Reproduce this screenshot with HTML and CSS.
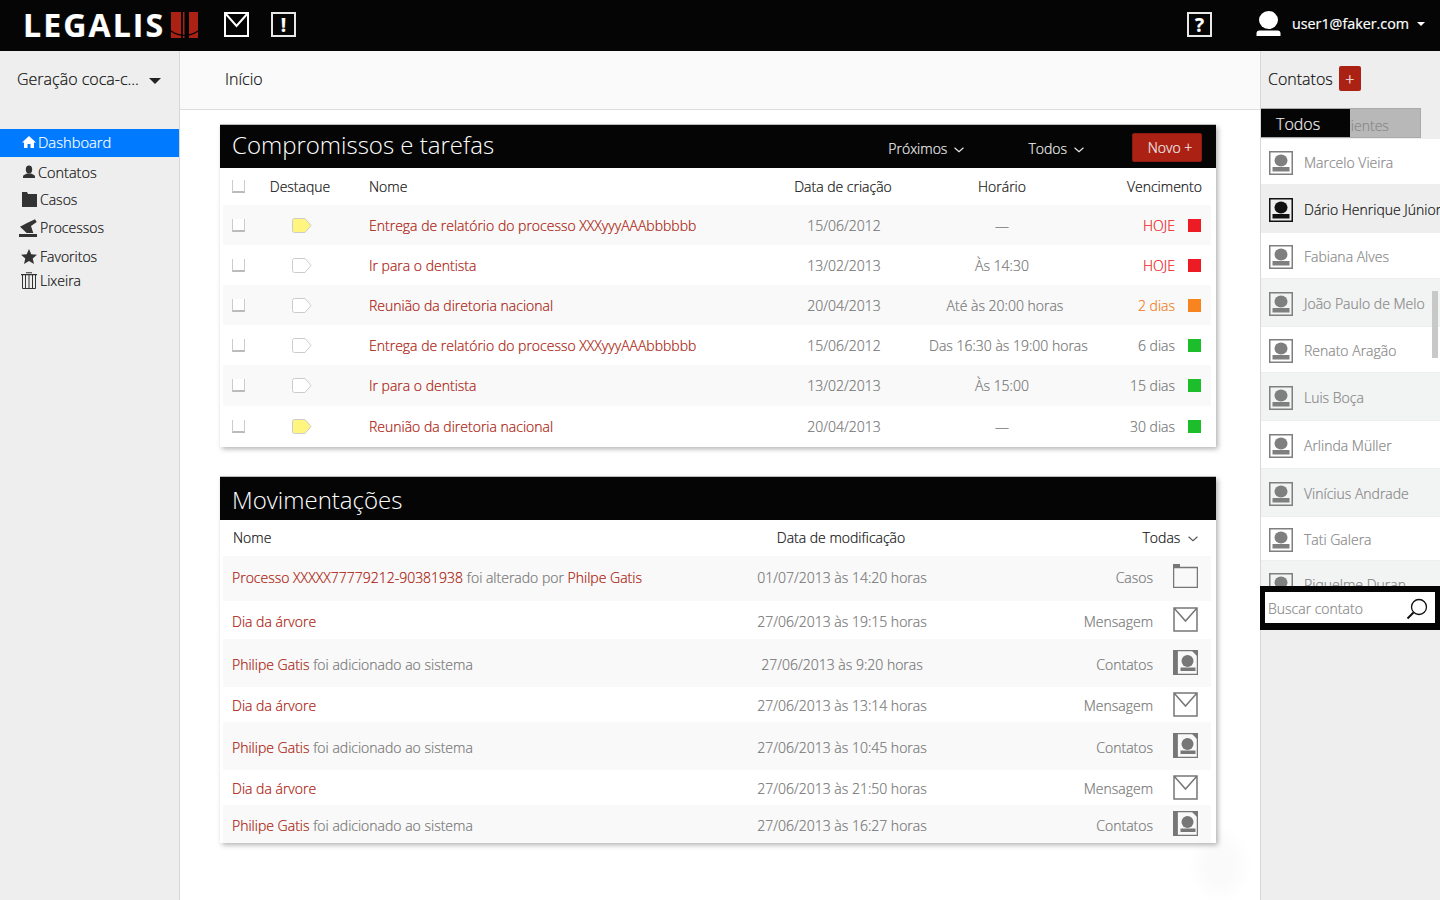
FILE: index.html
```html
<!DOCTYPE html>
<html lang="pt-BR">
<head>
<meta charset="UTF-8" />
<meta name="viewport" content="width=device-width, initial-scale=1.0" />
<title>Legalis</title>
<link rel="stylesheet" href="styles.css">
</head>
<body>

<svg class="sprites" width="0" height="0">
    <symbol id="i-mail" viewBox="0 0 25 25"><path d="M1 1h23v23H1zM1 1l11.500 13L24 1" fill="none" stroke="currentColor"/></symbol>
    <symbol id="i-folder" viewBox="0 0 25 24"><path d="M.5 3.500h24v20H.5z" fill="none" stroke="currentColor"/><path d="M0 0h7v3.500H0z" fill="currentColor"/></symbol>
    <symbol id="i-book" viewBox="0 0 25 25"><path d="M0 0h4.500v25H0z" fill="currentColor"/><path d="M4 .5h20.500v24H4z" fill="none" stroke="currentColor"/><path d="M19 1h5v5z" fill="currentColor"/><circle cx="14.500" cy="11" r="6" fill="currentColor"/><path d="M7.500 17.500h15v3.500h-15z" fill="currentColor"/></symbol>
    <symbol id="i-avatar" viewBox="0 0 24 24"><path d="M.75.75h22.500v22.500H.75z" fill="none" stroke="currentColor" stroke-width="1.500"/><ellipse cx="12" cy="9.500" rx="6.500" ry="6" fill="currentColor"/><path d="M3.500 16h17v4.500h-17z" fill="currentColor"/></symbol>
    <symbol id="i-tag" viewBox="0 0 20 15"><path d="M2.500.5h10.500l6 7-6 7H2.500a2 2 0 0 1-2-2v-10a2 2 0 0 1 2-2z" stroke="#ccc"/></symbol>
    <symbol id="i-chevron" viewBox="0 0 9 5"><path d="M.5.5l4 3.500 4-3.500" fill="none" stroke="currentColor"/></symbol>
</svg>

<header class="topbar">
    <div class="logo">
        <span class="logo-text">LEGALIS</span>
        <svg class="logo-mark" width="27" height="26" viewBox="0 0 27 26"><path d="M0 0h10v26H0zM18 0h9v26h-9zM12 0h1.500v26H12z" fill="#ab2114"/><path d="M0 19q13.500 9 27 0" fill="none" stroke="#050505" stroke-width="1.200"/></svg>
    </div>
    <svg class="top-mail" width="25" height="25"><use href="#i-mail"/></svg>
    <span class="box-icon box-alert">!</span>
    <span class="box-icon box-help">?</span>
    <div class="user">
        <svg width="25" height="25" viewBox="0 0 25 25"><ellipse cx="12.500" cy="9" rx="9.500" ry="9" fill="#fff"/><path d="M.5 25v-2.500q0-3 3-3h18q3 0 3 3V25z" fill="#fff"/></svg>
        <span class="user-mail">user1@faker.com</span>
        <i class="caret caret-small"></i>
    </div>
</header>

<div class="layout">
    <aside class="sidebar">
        <div class="org">Geração coca-c...<i class="caret"></i></div>
        <nav class="nav">
            <a class="nav-item active">
                <svg width="14" height="14" viewBox="0 0 14 14"><path d="M7 1L0 7.500h2V13h3.500V9h3v4H12V7.500h2z" fill="currentColor"/></svg>
                Dashboard
            </a>
            <a class="nav-item nav-contatos">
                <svg width="14" height="14" viewBox="0 0 14 14"><ellipse cx="7" cy="4.500" rx="3.200" ry="4" fill="currentColor"/><path d="M1 13v-1.500Q1 10 3 9.500L5 8.500h4l2 1q2 .5 2 2V13z" fill="currentColor"/></svg>
                Contatos
            </a>
            <a class="nav-item nav-casos">
                <svg width="15" height="15" viewBox="0 0 15 15"><path d="M0 0h5l1 2h9v13H0z" fill="currentColor"/></svg>
                Casos
            </a>
            <a class="nav-item nav-processos">
                <svg width="18" height="18" viewBox="0 0 18 18"><path d="M0 15h18v3H0z" fill="currentColor"/><path d="M1 7.700L8 4 16 .3 17.700 3 12 7l2.300 7H7.700z" fill="currentColor"/></svg>
                Processos
            </a>
            <a class="nav-item nav-favoritos">
                <svg width="16" height="15" viewBox="0 0 16 15"><path d="M8 0l2.300 5.200 5.700.5-4.300 3.700 1.300 5.600L8 12l-5 3 1.300-5.600L0 5.700l5.700-.5z" fill="currentColor"/></svg>
                Favoritos
            </a>
            <a class="nav-item nav-lixeira">
                <svg width="16" height="17" viewBox="0 0 16 17"><path d="M0 2h16v1.200H0zM5 .3h6v1H5z" fill="currentColor"/><path d="M1.500 3v13.500h13V3M4.500 3v13.500M8 3v13.500M11.500 3v13.500" fill="none" stroke="currentColor"/></svg>
                Lixeira
            </a>
        </nav>
    </aside>

    <main class="main">
        <div class="crumb">Início</div>

        <section class="panel panel-tasks">
            <div class="panel-head">
                <h2>Compromissos e tarefas</h2>
                <div class="panel-tools">
                    <span class="filter filter-next">Próximos <svg width="10" height="6"><use href="#i-chevron"/></svg></span>
                    <span class="filter filter-all">Todos <svg width="10" height="6"><use href="#i-chevron"/></svg></span>
                    <button class="btn-new">Novo +</button>
                </div>
            </div>
            <div class="task task-head">
                <span class="check"></span>
                <span class="center">Destaque</span>
                <span class="name">Nome</span>
                <span class="center">Data de criação</span>
                <span class="center">Horário</span>
                <span class="right">Vencimento</span>
            </div>
            <div class="task">
                <span class="check"></span>
                <svg class="tag on" width="20" height="15"><use href="#i-tag"/></svg>
                <a class="name link">Entrega de relatório do processo XXXyyyAAAbbbbbb</a>
                <span class="center date">15/06/2012</span>
                <span class="center">—</span>
                <span class="due red">HOJE <i class="sq sq-red"></i></span>
            </div>
            <div class="task">
                <span class="check"></span>
                <svg class="tag" width="20" height="15"><use href="#i-tag"/></svg>
                <a class="name link">Ir para o dentista</a>
                <span class="center date">13/02/2013</span>
                <span class="center">Às 14:30</span>
                <span class="due red">HOJE <i class="sq sq-red"></i></span>
            </div>
            <div class="task">
                <span class="check"></span>
                <svg class="tag" width="20" height="15"><use href="#i-tag"/></svg>
                <a class="name link">Reunião da diretoria nacional</a>
                <span class="center date">20/04/2013</span>
                <span class="center wide">Até às 20:00 horas</span>
                <span class="due orange">2 dias <i class="sq sq-orange"></i></span>
            </div>
            <div class="task">
                <span class="check"></span>
                <svg class="tag" width="20" height="15"><use href="#i-tag"/></svg>
                <a class="name link">Entrega de relatório do processo XXXyyyAAAbbbbbb</a>
                <span class="center date">15/06/2012</span>
                <span class="center wide">Das 16:30 às 19:00 horas</span>
                <span class="due">6 dias <i class="sq sq-green"></i></span>
            </div>
            <div class="task">
                <span class="check"></span>
                <svg class="tag" width="20" height="15"><use href="#i-tag"/></svg>
                <a class="name link">Ir para o dentista</a>
                <span class="center date">13/02/2013</span>
                <span class="center">Às 15:00</span>
                <span class="due">15 dias <i class="sq sq-green"></i></span>
            </div>
            <div class="task">
                <span class="check"></span>
                <svg class="tag on" width="20" height="15"><use href="#i-tag"/></svg>
                <a class="name link">Reunião da diretoria nacional</a>
                <span class="center date">20/04/2013</span>
                <span class="center">—</span>
                <span class="due">30 dias <i class="sq sq-green"></i></span>
            </div>
        </section>

        <section class="panel panel-moves">
            <div class="panel-head">
                <h2>Movimentações</h2>
            </div>
            <div class="move move-head">
                <span>Nome</span>
                <span class="center">Data de modificação</span>
                <span class="right">Todas <svg width="10" height="6"><use href="#i-chevron"/></svg></span>
            </div>
            <div class="moves">
                <div class="move">
                    <span><a class="link">Processo XXXXX77779212-90381938</a> foi alterado por <a class="link">Philpe Gatis</a></span>
                    <span class="center">01/07/2013 às 14:20 horas</span>
                    <span class="kind">Casos <svg width="25" height="24"><use href="#i-folder"/></svg></span>
                </div>
                <div class="move">
                    <a class="link">Dia da árvore</a>
                    <span class="center">27/06/2013 às 19:15 horas</span>
                    <span class="kind">Mensagem <svg width="25" height="25"><use href="#i-mail"/></svg></span>
                </div>
                <div class="move">
                    <span><a class="link">Philipe Gatis</a> foi adicionado ao sistema</span>
                    <span class="center">27/06/2013 às 9:20 horas</span>
                    <span class="kind">Contatos <svg width="25" height="25"><use href="#i-book"/></svg></span>
                </div>
                <div class="move">
                    <a class="link">Dia da árvore</a>
                    <span class="center">27/06/2013 às 13:14 horas</span>
                    <span class="kind">Mensagem <svg width="25" height="25"><use href="#i-mail"/></svg></span>
                </div>
                <div class="move">
                    <span><a class="link">Philipe Gatis</a> foi adicionado ao sistema</span>
                    <span class="center">27/06/2013 às 10:45 horas</span>
                    <span class="kind">Contatos <svg width="25" height="25"><use href="#i-book"/></svg></span>
                </div>
                <div class="move">
                    <a class="link">Dia da árvore</a>
                    <span class="center">27/06/2013 às 21:50 horas</span>
                    <span class="kind">Mensagem <svg width="25" height="25"><use href="#i-mail"/></svg></span>
                </div>
                <div class="move">
                    <span><a class="link">Philipe Gatis</a> foi adicionado ao sistema</span>
                    <span class="center">27/06/2013 às 16:27 horas</span>
                    <span class="kind">Contatos <svg width="25" height="25"><use href="#i-book"/></svg></span>
                </div>
            </div>
        </section>
    </main>

    <aside class="contacts">
        <div class="contacts-head">
            Contatos
            <button class="btn-add">+</button>
        </div>
        <div class="tabs">
            <span class="tab">Todos</span>
            <span class="tab-other">Clientes</span>
        </div>
        <div class="contact-list">
            <div class="contact"><svg width="24" height="24"><use href="#i-avatar"/></svg>Marcelo Vieira</div>
            <div class="contact selected"><svg width="24" height="24"><use href="#i-avatar"/></svg>Dário Henrique Júnior</div>
            <div class="contact"><svg width="24" height="24"><use href="#i-avatar"/></svg>Fabiana Alves</div>
            <div class="contact"><svg width="24" height="24"><use href="#i-avatar"/></svg>João Paulo de Melo</div>
            <div class="contact"><svg width="24" height="24"><use href="#i-avatar"/></svg>Renato Aragão</div>
            <div class="contact"><svg width="24" height="24"><use href="#i-avatar"/></svg>Luis Boça</div>
            <div class="contact"><svg width="24" height="24"><use href="#i-avatar"/></svg>Arlinda Müller</div>
            <div class="contact"><svg width="24" height="24"><use href="#i-avatar"/></svg>Vinícius Andrade</div>
            <div class="contact"><svg width="24" height="24"><use href="#i-avatar"/></svg>Tati Galera</div>
            <div class="contact"><svg width="24" height="24"><use href="#i-avatar"/></svg>Riquelme Duran</div>
            <span class="scroll-thumb"></span>
        </div>
        <div class="search">
            <div class="search-box">
                Buscar contato
                <svg width="22" height="22" viewBox="0 0 22 22"><circle cx="13" cy="9" r="7.500" fill="none" stroke="#111" stroke-width="1.300"/><path d="M7.500 14.500L1.500 20.500" stroke="#111" stroke-width="2"/></svg>
            </div>
        </div>
    </aside>
</div>

</body>
</html>
```

FILE: styles.css
```css
* {
    box-sizing: border-box;
}
body {
    margin: 0;
    height: 900px;
    overflow: hidden;
    font-family: "Open Sans", sans-serif;
    font-size: 14px;
    font-weight: 300;
    -webkit-text-stroke: 0.2px;
    color: #111;
    background-color: #fff;
}
.sprites {
    position: absolute;
}
button {
    all: unset;
    cursor: pointer;
}

/* top bar */
.topbar {
    display: flex;
    align-items: center;
    height: 51px;
    padding-bottom: 2px;
    background: #050505;
    color: #fff;
    stroke-width: 2;
}
.logo {
    display: flex;
    align-items: center;
    width: 224px;
    padding-left: 23px;
}
.logo-text {
    font-size: 32px;
    font-weight: 700;
    letter-spacing: 2.1px;
    line-height: 49px;
}
.logo-mark {
    margin-left: 6px;
}
.box-icon {
    display: flex;
    align-items: center;
    justify-content: center;
    width: 25px;
    height: 25px;
    border: 2px solid #e8e8e8;
    font-size: 19px;
    font-weight: 700;
}
.box-alert {
    margin-left: 22px;
}
.box-help {
    margin-left: auto;
}
.user {
    display: flex;
    align-items: center;
    margin: -2px 0 0 44px;
    padding-right: 15px;
}
.user-mail {
    margin-left: 11px;
    font-size: 14.3px;
    font-weight: 400;
}
.caret {
    display: inline-block;
    width: 0;
    height: 0;
    border-left: 6px solid transparent;
    border-right: 6px solid transparent;
    border-top: 6px solid #222;
}
.caret-small {
    margin-left: 8px;
    border-left-width: 4px;
    border-right-width: 4px;
    border-top: 4px solid #fff;
}

.layout {
    display: flex;
    height: 849px;
}

/* left menu */
.sidebar {
    flex: 0 0 180px;
    background: #eee;
    border-right: 1px solid #d8d8d8;
}
.org {
    display: flex;
    align-items: center;
    gap: 10px;
    height: 78px;
    padding: 0 0 22px 17px;
    font-size: 16px;
    white-space: pre;
}
.org .caret {
    margin-top: 3px;
}
.nav {
    display: grid;
    grid-template-rows: 28px 30px 25px 31px 27px 21px;
}
.nav-item {
    display: flex;
    align-items: center;
    gap: 2px;
    padding-left: 22px;
    font-size: 14px;
    color: #111;
}
.nav-item svg {
    color: #333;
}
.nav-item.active {
    padding-bottom: 2px;
    background: #007bff;
    color: #fff;
    font-size: 14.7px;
}
.nav-item.active svg {
    color: #fff;
}
.nav-contatos {
    font-size: 14.5px;
}
.nav-casos svg {
    margin-right: 1px;
}
.nav-processos {
    padding-left: 19px;
}
.nav-processos svg {
    margin-right: 1px;
}
.nav-favoritos {
    padding-left: 21px;
}
.nav-favoritos svg {
    margin-right: 1px;
}
.nav-lixeira {
    padding-left: 21px;
}
.nav-lixeira svg {
    margin-right: 1px;
}

/* center */
.main {
    position: relative;
    flex: 0 0 1080px;
}
.main::after {
    content: "";
    position: absolute;
    z-index: -1;
    left: 1008px;
    top: 774px;
    width: 64px;
    height: 80px;
    background: radial-gradient(closest-side, #fafafa 40%, transparent);
}
.crumb {
    display: flex;
    align-items: center;
    height: 59px;
    padding: 0 0 2px 45px;
    background: #fafafa;
    border-bottom: 1px solid #ddd;
    font-size: 16px;
}
.panel {
    width: 996px;
    margin-left: 40px;
    background: #fff;
    box-shadow: 0 -1px 0 #bbb, 2px 2px 5px rgba(0,0,0,0.3);
}
.panel-tasks {
    margin-top: 15px;
    height: 322px;
}
.panel-moves {
    margin-top: 30px;
    height: 366px;
}
.panel-head {
    display: flex;
    justify-content: space-between;
    align-items: center;
    height: 43px;
    padding-left: 12px;
    background: #050505;
    color: #fff;
}
.panel-head h2 {
    margin: 0;
    font-size: 24px;
    font-weight: 300;
    -webkit-text-stroke: 0;
}
.panel-tasks h2 {
    margin-bottom: 4px;
}
.panel-moves h2 {
    margin-top: 2px;
}
.panel-tools {
    display: flex;
    align-items: center;
    padding-right: 14px;
}
.filter {
    display: flex;
    align-items: center;
    gap: 7px;
    color: #eee;
    padding-top: 4px;
}
.filter svg {
    margin-top: 3px;
}
.filter-all {
    margin-left: 64px;
}
.btn-new {
    display: flex;
    justify-content: center;
    width: 70px;
    height: 29px;
    margin: 2px 0 0 48px;
    padding-left: 6px;
    box-sizing: border-box;
    background: #ab2114;
    border: 1px solid #8c1a10;
    border-radius: 2px;
    color: #eee;
    font-size: 14px;
    line-height: 27px;
}

/* tasks table */
.task {
    display: grid;
    grid-template-columns: 25px 86px 420px 160px 158px 121px;
    align-items: center;
    height: 40px;
    margin: 0 5px 0 3px;
    padding-left: 9px;
    color: #777;
}
.task:nth-child(odd) {
    background: #f9f9f9;
}
.task:nth-child(7) {
    height: 41px;
}
.task-head {
    height: 37px;
    color: #111;
}
.center {
    text-align: center;
    white-space: nowrap;
}
.wide {
    padding-left: 6px;
}
.date {
    padding-left: 2px;
}
.right {
    text-align: right;
}
.name {
    padding-left: 26px;
}
.link {
    color: #ab1a0e;
}
.check {
    display: block;
    width: 13px;
    height: 13px;
    background: #fff;
    border: 1px solid #ccc;
    border-top: none;
    border-bottom: 2px solid #bbb;
}
.tag {
    display: block;
    margin-left: 35px;
    fill: #fff;
}
.tag.on {
    fill: #fff57f;
}
.due {
    display: flex;
    justify-content: flex-end;
    align-items: center;
    gap: 13px;
    padding-right: 1px;
}
.due.red {
    color: #ed1c24;
}
.due.orange {
    color: #f47b20;
}
.sq {
    display: block;
    width: 13px;
    height: 13px;
}
.sq-red {
    background: #ed1c24;
}
.sq-orange {
    background: #f7841e;
}
.sq-green {
    background: #1dbe2b;
}

/* moves table */
.moves {
    display: grid;
    grid-template-rows: 45px 38px 48px 35px 48px 35px 38px;
}
.move {
    display: grid;
    grid-template-columns: 508px 204px 254px;
    align-items: center;
    margin: 0 5px 0 3px;
    padding: 2px 0 0 9px;
    color: #777;
}
.moves .move:nth-child(odd) {
    background: #f9f9f9;
}
.moves .move:first-child {
    padding: 0 0 2px 9px;
}
.move-head {
    grid-template-columns: 506px 204px 255px;
    height: 36px;
    padding: 0 0 2px 10px;
    color: #111;
}
.move-head svg {
    margin: 0 0 1px 4px;
    color: #555;
}
.kind {
    display: flex;
    justify-content: flex-end;
    align-items: center;
    gap: 20px;
    color: #777;
    stroke-width: 1.5;
}
.kind svg {
    margin-top: -3px;
    color: #777;
}

/* right column */
.contacts {
    flex: 1;
    min-width: 0;
    background: #eee;
    border-left: 1px solid #d8d8d8;
}
.contacts-head {
    display: flex;
    align-items: center;
    gap: 6px;
    height: 57px;
    padding: 0 0 2px 7px;
    font-size: 16px;
}
.btn-add {
    display: flex;
    justify-content: center;
    align-items: center;
    width: 22px;
    height: 25px;
    background: #ab2114;
    border-radius: 2px;
    color: #eee;
    font-size: 16px;
}
.tabs {
    position: relative;
    width: 160px;
    height: 31px;
    overflow: hidden;
}
.tab {
    position: absolute;
    left: 0;
    top: 1px;
    width: 89px;
    height: 28px;
    padding: 1px 0 0 15px;
    background: #050505;
    color: #eee;
    font-size: 16px;
    line-height: 28px;
}
.tab-other {
    display: block;
    height: 30px;
    padding: 7px 0 0 77px;
    background: #b8b8b8;
    border: 1px solid #aaa;
    color: #888;
    line-height: 20px;
}
.contact-list {
    position: relative;
    display: grid;
    grid-template-rows: 46px 48px 46px 48px 46px 48px 48px 48px 44px 46px;
    height: 447px;
    overflow: hidden;
    white-space: nowrap;
}
.contact {
    display: flex;
    align-items: center;
    gap: 11px;
    padding: 2px 0 0 8px;
    color: #888;
    background: #fff;
    border-bottom: 1px solid #eee;
}
.contact svg {
    flex: none;
    color: #7f7f7f;
}
.contact:nth-child(even) {
    background: #f2f3f3;
}
.contact.selected {
    background: #eee;
    color: #111;
}
.contact.selected svg {
    color: #111;
}
.scroll-thumb {
    position: absolute;
    right: 2px;
    top: 152px;
    width: 6px;
    height: 67px;
    background: #c8c8c8;
}
.search {
    height: 44px;
    margin-left: -1px;
    padding: 6px 5px 7px 5px;
    background: #050505;
}
.search-box {
    display: flex;
    justify-content: space-between;
    align-items: center;
    height: 31px;
    padding: 2px 7px 0 3px;
    background: #fff;
    color: #888;
}
```
